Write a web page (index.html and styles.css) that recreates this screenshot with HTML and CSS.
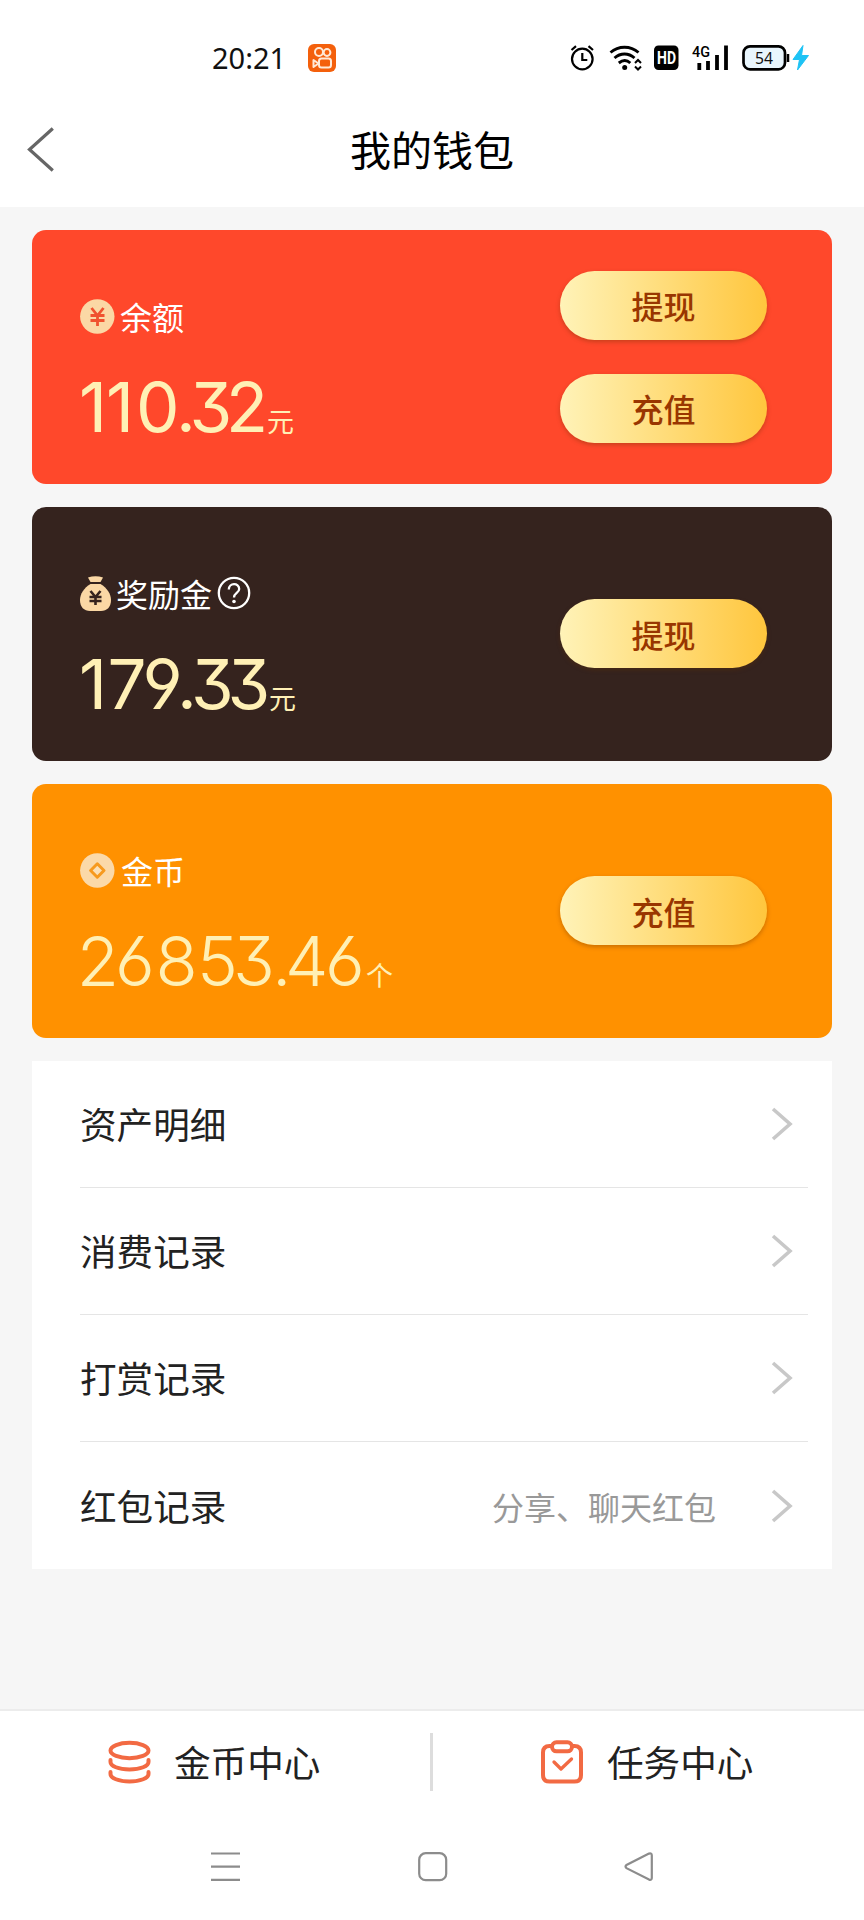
FILE: index.html
```html
<!DOCTYPE html>
<html lang="zh-CN">
<head>
<meta charset="utf-8">
<title>我的钱包</title>
<link rel="stylesheet" href="styles.css">
</head>
<body>
<div class="status">
  <div class="status-left">
    <span class="clock">20:21</span>
    <svg width="30" height="30" viewBox="0 0 30 30" fill="none" stroke="#ffe9d6" stroke-width="2"><rect x="1" y="1" width="28" height="28" rx="6" fill="#f4600c" stroke="none"/><circle cx="12" cy="9" r="4"/><circle cx="20" cy="9.500" r="3.400"/><rect x="12" y="15.500" width="12" height="9" rx="2.500"/><path d="M11.500 20.500 6.500 17v7z" stroke-linejoin="round"/></svg>
  </div>
  <svg width="240" height="30" viewBox="570 43 240 30" fill="none" stroke="#000">
    <g stroke-width="2.200"><circle cx="582.300" cy="59" r="10.300"/><path d="M582.300 53v7h5M571.500 50l4.500-3.800M593 50l-4.500-3.800"/></g>
    <g stroke-width="2.900"><path d="M610.500 52.500c8-7 20-7 28 0M614.500 58c6-5.300 14-5.300 20 0M618.800 63c4-3.200 8-3.200 11.500 0"/></g>
    <circle cx="624.700" cy="67.500" r="2.500" fill="#000" stroke="none"/>
    <path d="M635 63l3-3 3 3M635 66.500l3 3 3-3" stroke-width="2"/>
    <rect x="654" y="45.500" width="24.500" height="24.500" rx="4.500" fill="#000" stroke="none"/>
    <text class="hd" x="657" y="64" textLength="19" lengthAdjust="spacingAndGlyphs">HD</text>
    <text class="net" x="692" y="57" textLength="18" lengthAdjust="spacingAndGlyphs">4G</text>
    <path d="M699.300 63v7M708 61V70M717 55v15M726 45.500V70" stroke-width="3.800"/>
    <rect x="743.500" y="46.300" width="41.500" height="23" rx="6.500" fill="#e9f6fd" stroke-width="2.700"/>
    <path d="M788 54v8" stroke-width="2.500"/>
    <text class="bat" x="755" y="63.500" textLength="18" lengthAdjust="spacingAndGlyphs">54</text>
    <path d="M803 45.500 793 59.500h6.500L797.500 70 808.500 55.500H801.500z" fill="#1ec3f5" stroke="#1ec3f5" stroke-width="1"/>
  </svg>
</div>
<header class="header">
  <svg class="back" width="28" height="48" viewBox="27 125 28 48" fill="none" stroke="#666" stroke-width="3.200"><path d="M52.800 128.500 29.500 149.500l23.300 21"/></svg>
  <h1 class="title">我的钱包</h1>
</header>
<main class="main">
  <section class="card red">
    <div class="info">
      <div class="label gap-yuan">
        <svg width="35" height="35" viewBox="0 0 35 35"><circle cx="17.300" cy="17.500" r="17.200" fill="#fbd8a5"/><path d="M11.500 9l6 7.500 6-7.500M10.500 16.500h14M10.500 21.500h14M17.500 16.500V27" fill="none" stroke="#f0522f" stroke-width="2.800"/></svg>
        <span>余额</span>
      </div>
      <div class="amount">
        <svg width="186" height="60" viewBox="0 0 186 60"><text class="num" x="-1 26 56 96 109.5 146" y="54">110.32</text></svg><span class="unit">元</span>
      </div>
    </div>
    <div class="actions"><button class="btn">提现</button><button class="btn">充值</button></div>
  </section>
  <section class="card dark">
    <div class="info">
      <div class="label gap-bag">
        <svg width="31" height="35" viewBox="0 0 31 35"><path d="M8 1.500Q15.500-.8 23 1.500L20.500 6H10.500z" fill="#fbd8a5"/><path d="M10.500 8h10C27 12 31 18 31 24c0 7-4 11-10 11H10C4 35 0 31 0 24 0 18 4 12 10.500 8z" fill="#fbd8a5"/><path d="M10.500 15l5 6 5-6M9.500 21h12M9.500 25h12M15.500 21v8" fill="none" stroke="#35231e" stroke-width="2.600"/></svg>
        <span>奖励金</span>
        <svg width="34" height="34" viewBox="0 0 34 34" fill="none" stroke="#fff" stroke-width="2.300"><circle cx="17" cy="17" r="15.200"/><path d="M11.800 13.500c0-7 10.400-7 10.400-.5 0 4-5.200 4-5.200 8.500"/><circle cx="17" cy="25.500" r="1.800" fill="#fff" stroke="none"/></svg>
      </div>
      <div class="amount">
        <svg width="188" height="60" viewBox="0 0 188 60"><text class="num" x="-1 27.5 62.5 97 111 147.5" y="54">179.33</text></svg><span class="unit">元</span>
      </div>
    </div>
    <div class="actions"><button class="btn">提现</button></div>
  </section>
  <section class="card orange">
    <div class="info">
      <div class="label gap-coin">
        <svg width="35" height="35" viewBox="0 0 35 35"><circle cx="17.300" cy="17.500" r="17.200" fill="#fbd9a8"/><path d="M17.300 10.800l6.700 6.700-6.700 6.700-6.700-6.700z" fill="#fbe0b8" stroke="#f79a1e" stroke-width="3" stroke-linejoin="round"/></svg>
        <span>金币</span>
      </div>
      <div class="amount">
        <svg width="285" height="60" viewBox="0 0 285 60"><text class="num thin" x="-3.3 35 75.5 117 153 192 205 245" y="54">26853.46</text></svg><span class="unit">个</span>
      </div>
    </div>
    <div class="actions"><button class="btn">充值</button></div>
  </section>
  <nav class="list">
    <a class="row"><span class="name">资产明细</span><svg class="chev" viewBox="0 0 22 34"><path d="M2 2l17 15L2 32"/></svg></a>
    <a class="row"><span class="name">消费记录</span><svg class="chev" viewBox="0 0 22 34"><path d="M2 2l17 15L2 32"/></svg></a>
    <a class="row"><span class="name">打赏记录</span><svg class="chev" viewBox="0 0 22 34"><path d="M2 2l17 15L2 32"/></svg></a>
    <a class="row"><span class="name">红包记录</span><span class="note">分享、聊天红包</span><svg class="chev" viewBox="0 0 22 34"><path d="M2 2l17 15L2 32"/></svg></a>
  </nav>
</main>
<footer class="tabs">
  <a class="tab coins">
    <svg width="44" height="44" viewBox="0 0 44 44" fill="none" stroke="#f26a43" stroke-width="4" stroke-linecap="round"><ellipse cx="22.500" cy="10.500" rx="19" ry="7.700"/><path d="M3.500 20v2c0 4 8 7.500 19 7.500s19-3.500 19-7.500v-2M3.500 32v2c0 4 8 7.500 19 7.500s19-3.500 19-7.500v-2"/></svg>
    <span>金币中心</span>
  </a>
  <i class="sep"></i>
  <a class="tab tasks">
    <svg width="44" height="44" viewBox="0 0 44 44" fill="none" stroke="#f26a43" stroke-width="4" stroke-linecap="round" stroke-linejoin="round"><path d="M12 6H9.500Q3 6 3 12.500V35q0 6.500 6.500 6.500h25Q41 41.500 41 35V12.500Q41 6 34.500 6H32"/><rect x="12" y="2.300" width="20" height="9" rx="4.500"/><path d="M14 22l7 7 10.500-10" stroke-width="3.300"/></svg>
    <span>任务中心</span>
  </a>
</footer>
<div class="sysnav">
  <svg width="30" height="30" viewBox="0 0 30 30"><path d="M0 1.500h29M0 14.700h29M0 27.800h29"/></svg>
  <svg width="30" height="30" viewBox="0 0 30 30"><rect x="1.200" y="1.200" width="27" height="27" rx="6.500"/></svg>
  <svg width="30" height="30" viewBox="0 0 30 30"><path d="M25 1.600 2.500 13Q.5 14.500 2.500 16.200L25 27.600Q27.800 28.500 27.800 26V3.500Q27.800.6 25 1.600z"/></svg>
</div>
</body>
</html>
```

FILE: styles.css
```css
* { box-sizing: border-box; }
body {
  margin: 0;
  width: 864px;
  height: 1920px;
  display: flex;
  flex-direction: column;
  background: #fff;
  color: #222;
  font-family: "Noto Sans CJK SC", sans-serif;
}
svg { display: block; flex: none; overflow: visible; }
.status {
  height: 100px;
  padding: 43px 54px 0 212px;
  display: flex;
  justify-content: space-between;
  align-items: flex-start;
}
.status-left { display: flex; align-items: center; gap: 22px; }
.clock {
  width: 73px;
  font: 29px/30px "Noto Sans", sans-serif;
  color: #111;
  white-space: nowrap;
}
.hd { font: 700 18px Roboto, sans-serif; fill: #fff; stroke: none; }
.net { font: 500 15px Roboto, sans-serif; fill: #000; stroke: none; }
.bat { font: 16px "Noto Sans", sans-serif; fill: #111; stroke: none; }
.header {
  height: 107px;
  padding: 0 27px;
  display: grid;
  grid-template-columns: 28px 1fr 28px;
}
.back { margin-top: 25px; }
.title {
  margin: 18px 0 0;
  font-size: 41px;
  line-height: 60px;
  font-weight: 400;
  color: #000;
  text-align: center;
}
.main {
  flex: 1;
  background: #f6f6f6;
  padding: 23px 32px 0;
  display: flex;
  flex-direction: column;
  gap: 23px;
}
.card {
  height: 254px;
  border-radius: 14px;
  padding: 0 65px 1px 48px;
  display: flex;
  justify-content: space-between;
  align-items: center;
}
.red { background: #ff482b; }
.dark { background: #35231e; }
.orange { background: #ff9100; }
.info { align-self: flex-start; padding-top: 63px; }
.label {
  height: 46px;
  display: flex;
  align-items: center;
  color: #fff;
  font-size: 32px;
  line-height: 46px;
}
.gap-yuan { gap: 5px; }
.gap-bag { gap: 5px; }
.gap-coin { gap: 6px; }
.amount { display: flex; align-items: flex-end; margin-top: 39px; gap: 1px; }
.num {
  font-family: Inter, sans-serif;
  font-size: 69px;
  font-weight: 400;
  font-feature-settings: "cv09", "cv03", "cv04";
  fill: #fff0b5;
}
.thin { font-weight: 350; }
.unit { color: #fff0b5; font-size: 27px; line-height: 32px; margin-bottom: 1px; }
.actions { display: flex; flex-direction: column; gap: 34px; }
.btn {
  width: 207px;
  height: 69px;
  border: 0;
  border-radius: 35px;
  padding: 0;
  background: linear-gradient(90deg, #fff3b8, #ffc63d);
  box-shadow: 0 2px 4px rgba(100, 50, 0, .35);
  color: #993600;
  font: 500 32px/44px "Noto Sans CJK SC", sans-serif;
}
.list { background: #fff; height: 508px; padding: 0 24px 0 48px; }
.row {
  height: 127px;
  display: flex;
  align-items: center;
  border-bottom: 1px solid #e5e5e5;
  padding-right: 15px;
}
.row:last-child { border-bottom: 0; }
.name { font-size: 36.6px; line-height: 54px; }
.note { margin: 0 0 0 auto; font-size: 32px; color: #999; }
.chev { width: 22px; height: 34px; margin-left: auto; fill: none; stroke: #c8c8c8; stroke-width: 3.6; }
.note + .chev { margin-left: 55px; }
.tabs {
  height: 116px;
  border-top: 2px solid #ececec;
  display: grid;
  grid-template-columns: 430px 3px 431px;
  align-items: start;
}
.tab { display: flex; align-items: center; gap: 23px; height: 54px; margin-top: 24px; font-size: 36.6px; line-height: 54px; }
.coins { padding-left: 107px; }
.tasks { padding-left: 107px; }
.sep { width: 3px; height: 58px; margin-top: 22px; background: #ddd; }
.sysnav {
  height: 95px;
  padding: 27px 210px 0 211px;
  display: flex;
  justify-content: space-between;
}
.sysnav svg { fill: none; stroke: #8c8c8c; stroke-width: 2.2; }
```
